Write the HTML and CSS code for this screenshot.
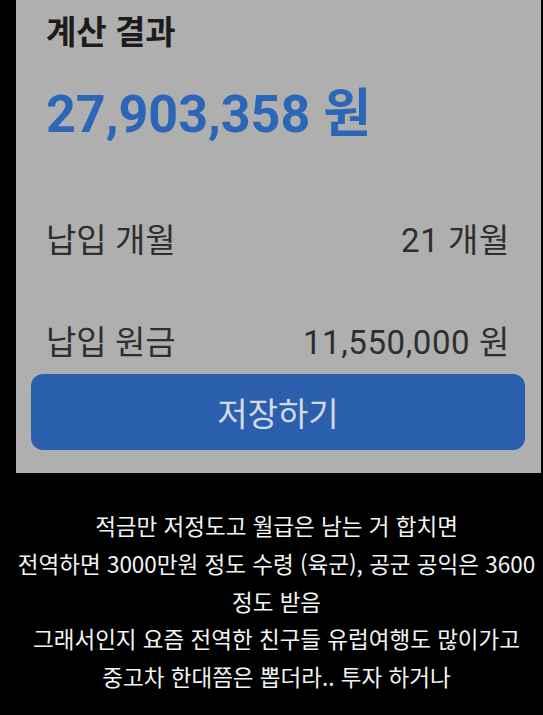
FILE: index.html
```html
<!DOCTYPE html>
<html lang="ko">
<head>
    <meta charset="UTF-8">
    <title>계산 결과</title>
    <link rel="stylesheet" href="styles.css">
</head>
<body>
    <div class="panel">
        <div class="title">계산 결과</div>
        <div class="amount">27,903,358 원</div>

        <div class="rows">
            <div class="row">
                <span>납입 개월</span>
                <span class="value">21 개월</span>
            </div>
            <div class="row">
                <span>납입 원금</span>
                <span class="value">11,550,000 원</span>
            </div>
        </div>

        <button class="save">저장하기</button>
    </div>

    <div class="caption">
        적금만 저정도고 월급은 남는 거 합치면<br>
        전역하면 3000만원 정도 수령 (육군), 공군 공익은 3600<br>
        정도 받음<br>
        그래서인지 요즘 전역한 친구들 유럽여행도 많이가고<br>
        중고차 한대쯤은 뽑더라.. 투자 하거나
    </div>
</body>
</html>
```

FILE: styles.css
```css
body {
    background-color: #000;
    margin: 0;
    font-family: Roboto, "Noto Sans CJK KR", sans-serif;
}
.panel {
    background-color: #afafaf;
    margin-left: 16px;
    width: 525px;
    padding: 0 31px 23px 30px;
    box-sizing: border-box;
}
.title {
    height: 66px;
    line-height: 66px;
    font-size: 33px;
    font-weight: bold;
    color: #1c1c1c;
}
.amount {
    height: 98px;
    line-height: 98px;
    font-size: 52px;
    font-weight: bold;
    color: #2c66b6;
}
.rows {
    margin-top: 52px;
}
.row {
    display: flex;
    justify-content: space-between;
    height: 50px;
    line-height: 50px;
    font-size: 33px;
    color: #2e2e2e;
}
.row .value {
    letter-spacing: 0.6px;
}
.row + .row {
    margin-top: 52px;
}
.save {
    display: block;
    margin: 6px -16px 0 -15px;
    width: 494px;
    height: 76px;
    background-color: #2a5fae;
    color: #d3d9e4;
    border: none;
    border-radius: 12px;
    font-family: Roboto, "Noto Sans CJK KR", sans-serif;
    font-size: 33px;
}
.caption {
    margin-top: 34px;
    padding-left: 10px;
    text-align: center;
    white-space: nowrap;
    color: #f4f4f4;
    font-family: "Noto Sans CJK KR", sans-serif;
    font-size: 22.5px;
    line-height: 37.8px;
}
```
